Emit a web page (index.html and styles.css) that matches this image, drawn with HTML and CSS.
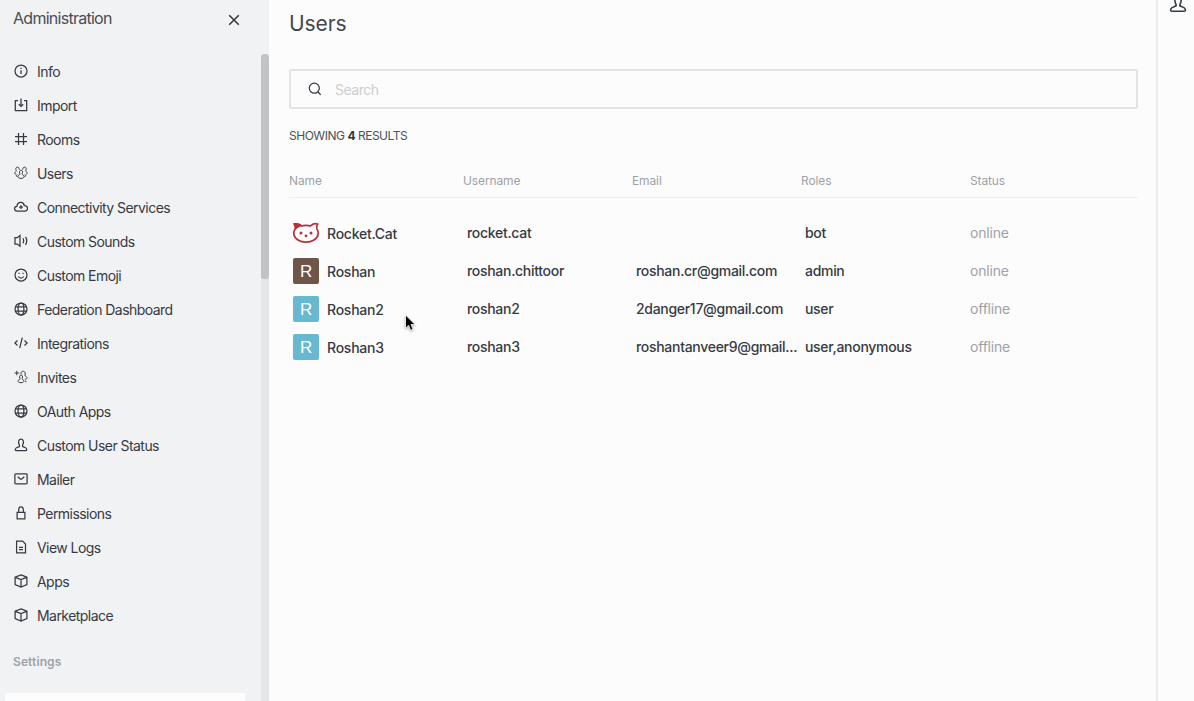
FILE: index.html
```html
<!DOCTYPE html>
<html lang="en">
<head>
<meta charset="utf-8">
<title>Administration - Users</title>
<link rel="stylesheet" href="styles.css">
</head>
<body>
<svg class="defs" aria-hidden="true">
  <symbol id="info" viewBox="0 0 14 14"><circle cx="7" cy="7" r="6"/><path d="M7 6.300v3.700M7 3.800v1.200"/></symbol>
  <symbol id="import" viewBox="0 0 14 14"><path d="M4 2.600H1.300v10h11.400v-10H10M7 .5v7.800M4.800 6.200 7 8.400l2.200-2.200"/></symbol>
  <symbol id="hash" viewBox="0 0 14 14"><path d="M4.500 1v12M9.500 1v12M1 4.500h12M1 9.500h12"/></symbol>
  <symbol id="team" viewBox="0 0 14 14"><path d="M5.800 7.300C4 3.300 10 3.300 8.200 7.300c-.4.900 0 1.300.9 1.700 1.700.8 1.500 3.400-2.100 3.400s-3.800-2.600-2.100-3.400c.9-.4 1.300-.8.900-1.700zM5.300 3.700C5.600.4 1.300.2 1.900 3.500c.3 1.300.6 1.600-.3 2.300C.2 6.800.7 8 2 8.200M8.700 3.700C8.400.4 12.700.2 12.100 3.500c-.3 1.300-.6 1.600.3 2.300 1.400 1 .9 2.200-.4 2.400M3.400 8.600l-1.200.9.9 1.300M10.600 8.600l1.200.9-.9 1.300"/></symbol>
  <symbol id="cloud" viewBox="0 0 14 14"><path d="M3.300 11.200C-.4 11-.2 6.400 2.900 6.300 3.400 1.400 9.600 1.200 10.300 5.700c4.400-.2 4.200 5.400.4 5.500zM7 5.300v3.800M5.100 7.200h3.800"/></symbol>
  <symbol id="sound" viewBox="0 0 14 14"><path d="M6 1.500v10.700L3.300 10H1V3.700h2.300zM9 4.300c.9 1.700.9 3.400 0 5M11.500 2.800c1.700 2.700 1.700 5.300 0 8"/></symbol>
  <symbol id="emoji" viewBox="0 0 14 14"><circle cx="7" cy="7" r="6"/><path d="M4.300 8.500c1.200 2 4.200 2 5.400 0M5 4.700v1.200M9 4.700v1.200"/></symbol>
  <symbol id="globe" viewBox="0 0 14 14"><circle cx="7" cy="7" r="6"/><ellipse cx="7" cy="7" rx="2.900" ry="6"/><path d="M1.500 4.800h11M1.500 9.200h11"/></symbol>
  <symbol id="code" viewBox="0 0 14 14"><path d="M3.500 4.500.9 7l2.600 2.500M10.500 4.500 13.100 7l-2.600 2.500M8.300 1.600 5.700 12.200"/></symbol>
  <symbol id="invite" viewBox="0 0 14 14"><path d="M2.800.8v4.400M.6 3H5M5.900 8.300C4.100 4 10 4 8.200 8.300c-.3.900 0 1.200.9 1.600 1.500.7 1.300 2.800-2.100 2.800s-3.700-2.100-2.100-2.800c1-.4 1.300-.7 1-1.600zM7 4.300C6.300.3 11.700.2 11.200 4c-.2 1.400-.4 1.900.7 2.400 1.700 1 1.500 2.700-1 3M11 11.100l1.500.5"/></symbol>
  <symbol id="user" viewBox="0 0 14 14"><path d="M5.400 7.300C1.500-1.100 12.500-1.100 8.600 7.300c-.5 1.100.1 1.500 1.500 1.800 2.900.7 3.400 3.500 1.600 3.500H2.300c-1.800 0-1.300-2.800 1.600-3.500 1.400-.3 2-.7 1.500-1.800z"/></symbol>
  <symbol id="mail" viewBox="0 0 14 14"><rect x=".9" y="1.900" width="12.200" height="10" rx=".8"/><path d="m3.700 4.700 2.300 2c.7.600 1.300.6 2 0l2.300-2"/></symbol>
  <symbol id="lock" viewBox="0 0 14 14"><path d="M3.100 6.300h7.800v6.500H3.100zM4.700 6.300V3.700c0-3.700 4.600-3.700 4.600 0v2.600"/></symbol>
  <symbol id="doc" viewBox="0 0 14 14"><path d="M2.600 1.100h6L11.500 4v8.800H2.600zM5 7.300h4M5 9.700h4"/></symbol>
  <symbol id="cube" viewBox="0 0 14 14"><path d="m7 .8 5.900 2.300v7.400L7 13l-5.900-2.500V3.100zM1.300 3.300 7 5.600l5.700-2.300M7 5.600V13"/></symbol>
</svg>
<div class="app">
  <aside class="sidebar">
    <div class="side-main">
      <header class="side-head">
        <h2>Administration</h2>
        <svg class="close" viewBox="0 0 12 12"><path d="m1.200 1.200 9.600 9.600M10.800 1.200l-9.600 9.600"/></svg>
      </header>
      <nav class="menu">
        <a class="item"><svg class="icon"><use href="#info"/></svg><span>Info</span></a>
        <a class="item"><svg class="icon"><use href="#import"/></svg><span>Import</span></a>
        <a class="item"><svg class="icon"><use href="#hash"/></svg><span>Rooms</span></a>
        <a class="item"><svg class="icon fine"><use href="#team"/></svg><span>Users</span></a>
        <a class="item"><svg class="icon"><use href="#cloud"/></svg><span>Connectivity Services</span></a>
        <a class="item"><svg class="icon"><use href="#sound"/></svg><span>Custom Sounds</span></a>
        <a class="item"><svg class="icon"><use href="#emoji"/></svg><span>Custom Emoji</span></a>
        <a class="item"><svg class="icon"><use href="#globe"/></svg><span>Federation Dashboard</span></a>
        <a class="item"><svg class="icon"><use href="#code"/></svg><span>Integrations</span></a>
        <a class="item"><svg class="icon fine"><use href="#invite"/></svg><span>Invites</span></a>
        <a class="item"><svg class="icon"><use href="#globe"/></svg><span>OAuth Apps</span></a>
        <a class="item"><svg class="icon"><use href="#user"/></svg><span>Custom User Status</span></a>
        <a class="item"><svg class="icon"><use href="#mail"/></svg><span>Mailer</span></a>
        <a class="item"><svg class="icon"><use href="#lock"/></svg><span>Permissions</span></a>
        <a class="item"><svg class="icon"><use href="#doc"/></svg><span>View Logs</span></a>
        <a class="item"><svg class="icon"><use href="#cube"/></svg><span>Apps</span></a>
        <a class="item"><svg class="icon"><use href="#cube"/></svg><span>Marketplace</span></a>
      </nav>
      <h3 class="side-title">Settings</h3>
      <div class="filter"></div>
    </div>
    <div class="track"><div class="thumb"></div></div>
  </aside>
  <main class="content">
    <h1>Users</h1>
    <div class="search">
      <svg viewBox="0 0 14 14"><circle cx="6.300" cy="6.200" r="5"/><path d="m10 10 2.700 2.700"/></svg>
      <span>Search</span>
    </div>
    <p class="results">SHOWING <b>4</b> RESULTS</p>
    <div class="row head"><span>Name</span><span>Username</span><span>Email</span><span>Roles</span><span>Status</span></div>
    <div class="rows">
      <div class="row">
        <div class="name">
          <svg class="avatar cat" viewBox="0 0 26 26"><path class="face" d="M1.200 4c2.200-.6 4.800-.1 7.200 1.900 3-.8 6.200-.8 9.200 0 2-1.900 4.600-2.600 7-1.900-.9 1.500-1.200 3.200-.6 5.100 1.200 1.800 1.400 3.400 1.100 5.200C24.300 19.200 19 22.100 13 22.100S1.700 19.200.9 14.300c-.3-1.800 0-3.400 1.100-5.200.6-1.900.2-3.600-.8-5.100z"/><path class="ear" d="M.5 3.200c3.500-.6 6.700.2 9.300 2.600C6.800 6.700 4.300 8 2.100 10.300 2.500 7.200 1.900 5 .5 3.200z"/><circle cx="8" cy="13" r="1.500"/><circle cx="18" cy="13" r="1.500"/><circle cx="13" cy="15.800" r="1.400"/></svg>
          <span>Rocket.Cat</span>
        </div>
        <span>rocket.cat</span><span></span><span>bot</span><span class="status">online</span>
      </div>
      <div class="row">
        <div class="name"><i class="avatar brown">R</i><span>Roshan</span></div>
        <span>roshan.chittoor</span><span>roshan.cr@gmail.com</span><span>admin</span><span class="status">online</span>
      </div>
      <div class="row">
        <div class="name"><i class="avatar blue">R</i><span>Roshan2</span></div>
        <span>roshan2</span><span>2danger17@gmail.com</span><span>user</span><span class="status">offline</span>
      </div>
      <div class="row">
        <div class="name"><i class="avatar blue">R</i><span>Roshan3</span></div>
        <span>roshan3</span><span>roshantanveer9@gmail...</span><span>user,anonymous</span><span class="status">offline</span>
      </div>
    </div>
  </main>
  <div class="rail"><svg class="rail-icon"><use href="#user"/></svg></div>
</div>
<svg class="cursor" viewBox="0 0 14 20"><path d="M1.500 1v13.200l3.100-2.800 2.100 4.900 2.300-1-2-4.700h4.100z"/></svg>
</body>
</html>
```
FILE: styles.css
```css
* { box-sizing: border-box; }
body {
  margin: 0;
  height: 701px;
  overflow: hidden;
  background: #fcfcfc;
  color: #363a43;
  font-family: Inter, "Liberation Sans", sans-serif;
  font-size: 14px;
}
h1, h2, h3, p { margin: 0; font-weight: 400; }
.defs { position: absolute; width: 0; height: 0; }
.app { display: flex; height: 701px; }
svg { fill: none; stroke: #363a43; stroke-width: 1.250; flex: none; }

.sidebar { display: flex; width: 269px; background: #f1f2f3; }
.side-main { width: 261px; }
.side-head {
  display: flex;
  justify-content: space-between;
  align-items: center;
  height: 55px;
  padding: 0 21px 17px 13px;
}
.side-head h2 { padding-bottom: 2px; font-size: 16px; letter-spacing: -0.73px; color: #4a4d53; }
.close { width: 12px; height: 12px; margin-top: 2px; stroke-width: 1.6; }
.item {
  display: flex;
  align-items: center;
  gap: 9px;
  height: 34px;
  padding-left: 14px;
  letter-spacing: -0.55px;
  white-space: nowrap;
}
.item span { padding-bottom: 1px; }
.icon { width: 14px; height: 14px; margin-top: -2px; }
.fine { stroke-width: 1; }
.side-title {
  padding: 20px 13px 0;
  font-size: 12px;
  line-height: 18px;
  letter-spacing: .1px;
  font-weight: 600;
  color: #9ea2a8;
}
.filter { width: 240px; height: 8px; margin: 22px 0 0 5px; background: #fdfdfd; }
.track { width: 8px; padding-top: 54px; background: linear-gradient(#f1f2f3 54px, #e5e6e7 54px); }
.thumb { height: 225px; border-radius: 4px 4px 3px 3px; background: #c2c3c5; }

.content { width: 887px; padding: 10px 18px 0 20px; }
h1 { font-size: 21px; line-height: 27px; letter-spacing: -.1px; color: #44474d; }
.search {
  display: flex;
  align-items: center;
  gap: 13px;
  height: 40px;
  margin-top: 32px;
  padding-left: 17px;
  border: 2px solid #e3e3e3;
  border-radius: 2px;
  color: #cbced1;
  letter-spacing: -0.5px;
}
.search svg { width: 14px; height: 14px; margin-top: -1px; }
.results { margin-top: 18px; font-size: 12px; line-height: 18px; letter-spacing: -0.48px; color: #4d5056; }
.results b { font-weight: 700; color: #2f343d; }
.row {
  display: grid;
  grid-template-columns: 174px 169px 169px 169px 1fr;
  align-items: center;
  height: 38px;
  font-weight: 500;
  letter-spacing: -0.3px;
  white-space: nowrap;
}
.row > span { padding: 0 0 2px 4px; }
.row > .status { padding-left: 0; color: #9ea2a8; font-weight: 400; letter-spacing: -0.2px; }
.row.head {
  height: 33px;
  margin-top: 20px;
  border-bottom: 1px solid #eeeeef;
  font-size: 12px;
  font-weight: 400;
  letter-spacing: -0.12px;
  color: #9ea2a8;
}
.row.head > span { padding-left: 0; }
.rows { padding-top: 16px; }
.name { display: flex; align-items: center; gap: 8px; padding-left: 4px; letter-spacing: -0.25px; }
.name span { padding-top: 1px; }
.avatar {
  display: grid;
  place-items: center;
  width: 26px;
  height: 26px;
  padding-top: 1px;
  border-radius: 2px;
  color: #fff;
  font: 400 17px "Liberation Sans", sans-serif;
}
.brown { background: #6f5449; }
.blue { background: #66b9d0; }
.cat { padding: 0; stroke: none; fill: #b92f39; }
.cat .face { fill: #fff; stroke: #b92f39; stroke-width: 1.700; }

.rail { flex: 1; border-left: 2px solid #ededee; overflow: hidden; }
.rail-icon { display: block; width: 18px; height: 18px; margin: -5px 0 0 11px; }
.cursor {
  position: absolute;
  left: 404px;
  top: 314px;
  width: 14px;
  height: 20px;
  fill: #000;
  stroke: #fff;
  stroke-width: .8;
  filter: drop-shadow(0 1px 1px #0005);
}
```
